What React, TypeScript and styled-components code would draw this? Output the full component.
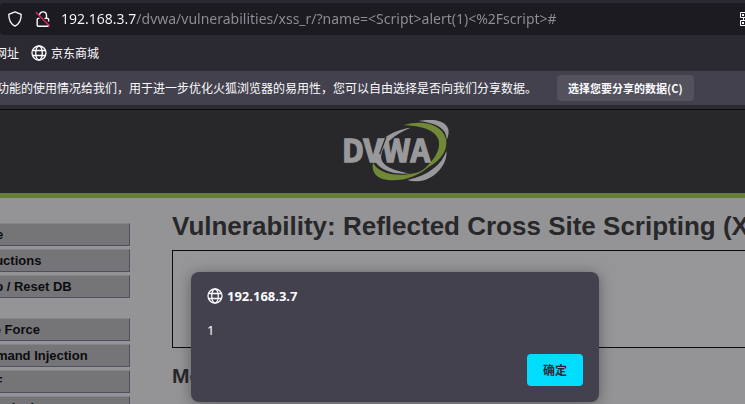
import React from "react";
import styled, { createGlobalStyle } from "styled-components";

const ui = `"Noto Sans", "Noto Sans CJK SC", sans-serif`;
const cjk = `"Noto Sans CJK SC", "Noto Sans", sans-serif`;

const GlobalStyle = createGlobalStyle`
  *, *::before, *::after { box-sizing: border-box; }
  html, body { margin: 0; height: 100%; overflow: hidden; background: #949496; }
  #root { height: 100%; }
  svg { flex: none; }
`;

const Browser = styled.div`
  position: relative;
  display: flex;
  flex-direction: column;
  height: 100%;
  overflow: hidden;
  font-family: ${ui};
`;

const Toolbar = styled.header`
  flex: none;
  padding-top: 3px;
  background: #2b2a33;
`;

const AddressBar = styled.div`
  display: flex;
  align-items: center;
  height: 32px;
  padding-left: 7px;
  background: #1c1b22;
  border-radius: 4px 0 0 4px;
  overflow: hidden;
`;

const IconButton = styled.button`
  display: flex;
  flex: none;
  width: 16px;
  height: 16px;
  margin-right: 12px;
  padding: 0;
  border: 0;
  background: none;
  color: #fbfbfe;
`;

const LockButton = styled(IconButton)`
  margin-right: 10px;
`;

const AddressInput = styled.input`
  flex: 1;
  min-width: 0;
  height: 24px;
  padding: 0;
  border: 0;
  outline: 0;
  font: 14px/24px ${ui};
  color: transparent;
  background: linear-gradient(to right, #fbfbfe 75px, #8f8f95 75px);
  background-clip: text;
  -webkit-background-clip: text;
`;

const QrButton = styled(IconButton)`
  width: 5px;
  margin: 0;
  overflow: hidden;
`;

const Bookmarks = styled.nav`
  display: flex;
  align-items: center;
  gap: 12px;
  height: 36px;
  margin-left: -5px;
`;

const Bookmark = styled.a`
  display: flex;
  align-items: center;
  gap: 4px;
  color: #fbfbfe;
  font: 12px/16px ${cjk};
  text-decoration: none;
  white-space: nowrap;
`;

const Notice = styled.section`
  display: flex;
  flex: none;
  align-items: center;
  gap: 20px;
  height: 34px;
  margin-left: -3px;
  background: #42414d;
  color: #fbfbfe;
  font: 12px/16px ${cjk};
  white-space: nowrap;
`;

const NoticeText = styled.p`
  margin: 0;
`;

const NoticeButton = styled.button`
  height: 26px;
  padding: 0 11px;
  border: 0;
  border-radius: 4px;
  background: #52515c;
  color: #fbfbfe;
  font: bold 11px/16px ${cjk};
`;

const Page = styled.main`
  flex: 1;
  min-height: 0;
  overflow: hidden;
  border-top: 4px solid #2b2a33;
  background: #949496;
  color: #28282a;
  font-family: "Liberation Sans", Arial, sans-serif;
`;

const Banner = styled.div`
  display: flex;
  justify-content: center;
  height: 89px;
  padding: 10px 0 0 46px;
  border-top: 1px solid #0c0c0d;
  border-bottom: 5px solid #677f27;
  background: #28282a;
`;

const Columns = styled.div`
  display: flex;
  gap: 42px;
  padding-top: 25px;
`;

const Menu = styled.nav`
  flex: none;
  width: 170px;
  margin-left: -40px;
`;

const MenuGroup = styled.ul`
  display: flex;
  flex-direction: column;
  gap: 3px;
  margin: 0 0 20px;
  padding: 0;
  list-style: none;
`;

const MenuLink = styled.a`
  display: block;
  height: 23px;
  padding: 2px 0 0 6px;
  border: 1px solid #4c5060;
  border-top-color: #858587;
  background: #757577;
  color: #0c0c10;
  font-size: 13px;
  font-weight: bold;
  line-height: 18px;
  text-decoration: none;
`;

const Content = styled.div`
  flex: 1;
  min-width: 0;
  white-space: nowrap;
`;

const Title = styled.h1`
  margin: -13px 0 8px;
  font-size: 26px;
  line-height: 32px;
`;

const CodeArea = styled.div`
  height: 98px;
  margin-right: -8px;
  border: 1px solid #0c0c0d;
  background: #969698;
`;

const Subtitle = styled.h2`
  margin: 15px 0 12px;
  font-size: 21px;
  line-height: 26px;
`;

const Links = styled.ul`
  margin: 0;
  padding-left: 40px;
  font-size: 13px;
  line-height: 18px;
  a { color: #677f27; }
`;

const Dialog = styled.section`
  position: absolute;
  top: 272px;
  left: 191px;
  width: 408px;
  display: flex;
  flex-direction: column;
  padding: 16px;
  border-radius: 8px;
  background: #42414d;
  box-shadow: 0 2px 14px rgba(12, 12, 20, 0.4);
  color: #fbfbfe;
`;

const DialogTitle = styled.h2`
  display: flex;
  align-items: center;
  gap: 4px;
  margin: 0;
  font-size: 13px;
  line-height: 16px;
`;

const DialogMessage = styled.p`
  margin: 17px 0 15px;
  font-size: 13px;
  line-height: 18px;
`;

const ConfirmButton = styled.button`
  align-self: flex-end;
  height: 32px;
  padding: 0 16px;
  border: 0;
  border-radius: 4px;
  background: #00ddff;
  color: #2b2a33;
  font: bold 12px/16px ${cjk};
`;

const Globe = () => (
  <svg width="16" height="16" viewBox="0 0 16 16" fill="none" stroke="currentColor" strokeWidth="1.3" aria-hidden="true">
    <circle cx="8" cy="8" r="7" />
    <ellipse cx="8" cy="8" rx="3.3" ry="7" />
    <path d="M1.5 5.5h13M1.5 10.5h13" />
  </svg>
);

const Shield = () => (
  <svg width="16" height="16" viewBox="0 0 16 16" fill="none" stroke="currentColor" strokeWidth="1.3" strokeLinejoin="round" aria-hidden="true">
    <path d="M8 .9 14.2 3.3C14.3 8.2 13 12.7 8 15.2 3 12.7 1.7 8.2 1.8 3.3Z" />
  </svg>
);

const InsecureLock = () => (
  <svg width="16" height="16" viewBox="0 0 16 16" fill="none" stroke="currentColor" strokeWidth="1.4" aria-hidden="true">
    <path d="M4.5 4.2C4.7 2 6 .9 8 .9c2.3 0 3.5 1.5 3.5 3.7v2.7M4.5 7.4H3.2a1 1 0 0 0-1 1v5.8a1 1 0 0 0 1 1h9.4a1 1 0 0 0 1-1v-.5M9.5 7.4h3.1a1 1 0 0 1 1 1v2" />
    <path d="M1 1.2 14.5 15" stroke="#e22850" strokeWidth="1.5" />
  </svg>
);

const QrCode = () => (
  <svg width="16" height="16" viewBox="0 0 16 16" fill="none" stroke="currentColor" aria-hidden="true">
    <path d="M.5 1.5h5v5h-5zM.5 9.5h5v5h-5zM9.5 1.5h5v5h-5z" />
    <path d="M2 4h2M2 12h2M11 4h2M9 10h2M13 14h2" strokeWidth="2" />
    <path d="M3.5 6v3" />
  </svg>
);

const DvwaLogo = () => (
  <svg width="106" height="62" viewBox="39 43 318 186" role="img" aria-label="DVWA">
    <path d="M266 46C306 38 347 43 355 71 357 80 355 93 350 102 350 72 326 53 266 46Z" fill="#99999b" />
    <path d="M242 66C180 74 132 112 131 148 130 184 180 210 240 203 187 195 148 178 154 147 159 116 190 88 242 66Z" fill="#99999b" />
    <path d="M232 223C296 209 335 177 349 136 354 174 316 220 271 226 257 228 244 227 232 223Z" fill="#99999b" />
    <path d="M220 59C277 41 338 56 348 101 355 138 326 172 283 190 315 159 334 130 325 101 316 75 277 60 220 59Z" fill="#718936" />
    <path d="M129 171C145 202 201 219 269 198L302 177C263 218 201 231 158 220 132 213 125 191 129 171Z" fill="#718936" />
    <text x="36" y="168" fill="#99999b" stroke="#99999b" strokeWidth="4" fontFamily="Noto Sans CJK SC, sans-serif" fontWeight="700" fontSize="92">DVWA</text>
    <path d="M168 94 149 146" stroke="#28282a" strokeWidth="4" />
  </svg>
);

const menuGroups = [
  ["Home", "Instructions", "Setup / Reset DB"],
  ["Brute Force", "Command Injection", "CSRF", "File Inclusion"],
];

export default function App() {
  return (
    <Browser>
      <GlobalStyle />
      <Toolbar>
        <AddressBar>
          <IconButton aria-label="Tracking protection"><Shield /></IconButton>
          <LockButton aria-label="Connection not secure"><InsecureLock /></LockButton>
          <AddressInput
            aria-label="Address"
            spellCheck={false}
            defaultValue="192.168.3.7/dvwa/vulnerabilities/xss_r/?name=<Script>alert(1)<%2Fscript>#"
          />
          <QrButton aria-label="QR code"><QrCode /></QrButton>
        </AddressBar>
        <Bookmarks>
          <Bookmark href="#">网址</Bookmark>
          <Bookmark href="#"><Globe />京东商城</Bookmark>
        </Bookmarks>
      </Toolbar>
      <Notice>
        <NoticeText>功能的使用情况给我们，用于进一步优化火狐浏览器的易用性，您可以自由选择是否向我们分享数据。</NoticeText>
        <NoticeButton>选择您要分享的数据(C)</NoticeButton>
      </Notice>
      <Page>
        <Banner><DvwaLogo /></Banner>
        <Columns>
          <Menu>
            {menuGroups.map((items) => (
              <MenuGroup key={items[0]}>
                {items.map((item) => (
                  <li key={item}><MenuLink href="#">{item}</MenuLink></li>
                ))}
              </MenuGroup>
            ))}
          </Menu>
          <Content>
            <Title>Vulnerability: Reflected Cross Site Scripting (XSS)</Title>
            <CodeArea />
            <Subtitle>More Information</Subtitle>
            <Links>
              <li><a href="#">https://www.owasp.org/index.php/Cross-site_Scripting_(XSS)</a></li>
            </Links>
          </Content>
        </Columns>
      </Page>
      <Dialog role="alertdialog" aria-labelledby="dialog-title" aria-describedby="dialog-message">
        <DialogTitle id="dialog-title"><Globe />192.168.3.7</DialogTitle>
        <DialogMessage id="dialog-message">1</DialogMessage>
        <ConfirmButton>确定</ConfirmButton>
      </Dialog>
    </Browser>
  );
}
